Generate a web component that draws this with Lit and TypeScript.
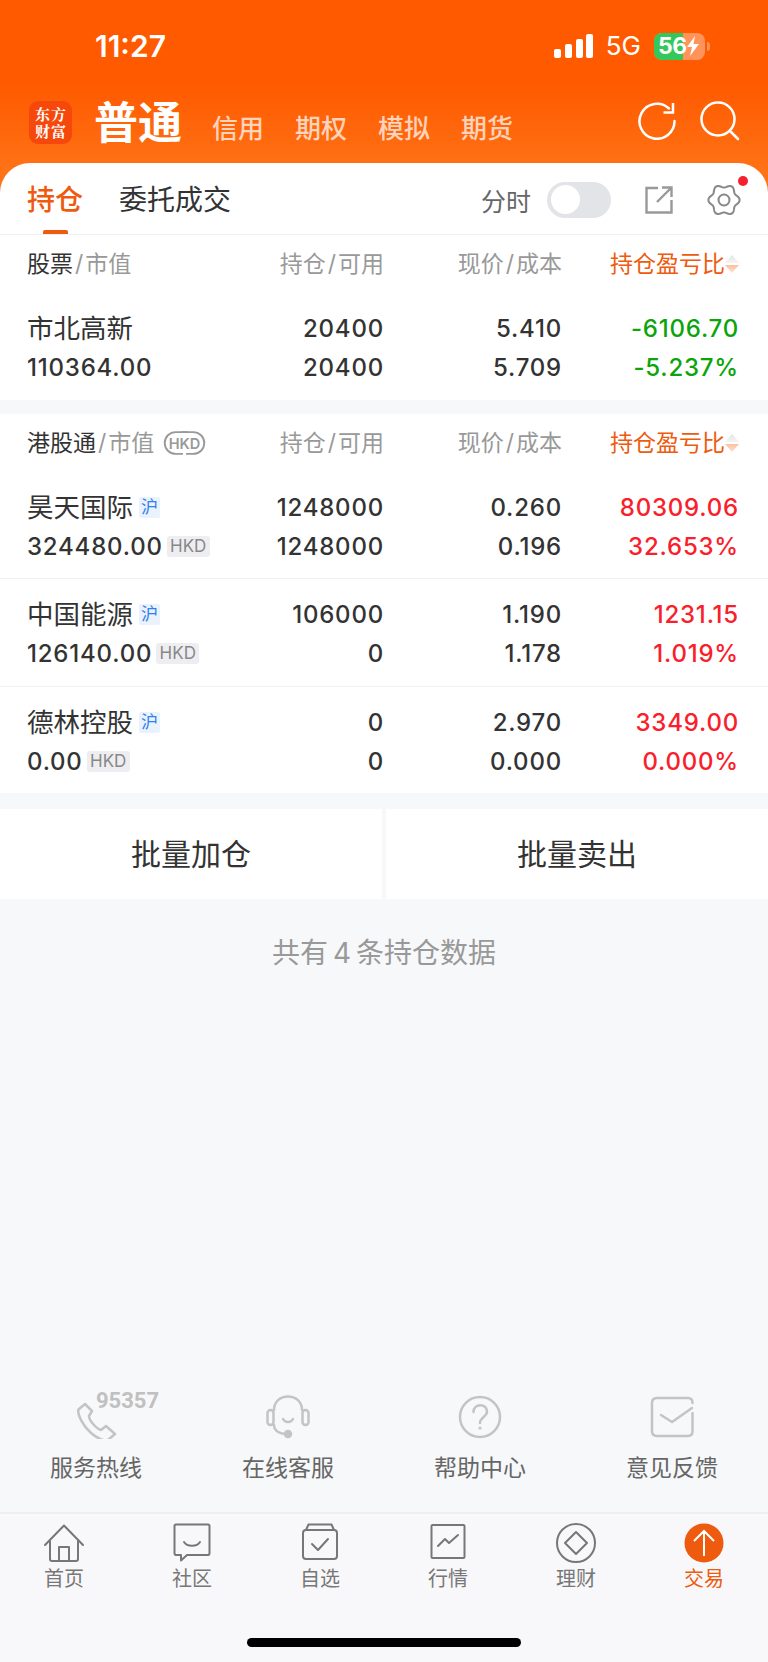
import { LitElement, html, css, svg } from "lit";
import { customElement } from "lit/decorators.js";

type Row = {
  name: string;
  sh?: boolean;
  value: string;
  hkd?: boolean;
  hold: string;
  avail: string;
  price: string;
  cost: string;
  pl: string;
  ratio: string;
  color: string;
};

const stockRows: Row[] = [
  { name: "市北高新", value: "110364.00", hold: "20400", avail: "20400", price: "5.410", cost: "5.709", pl: "-6106.70", ratio: "-5.237%", color: "down" },
];
const hkRows: Row[] = [
  { name: "昊天国际", sh: true, value: "324480.00", hkd: true, hold: "1248000", avail: "1248000", price: "0.260", cost: "0.196", pl: "80309.06", ratio: "32.653%", color: "up" },
  { name: "中国能源", sh: true, value: "126140.00", hkd: true, hold: "106000", avail: "0", price: "1.190", cost: "1.178", pl: "1231.15", ratio: "1.019%", color: "up" },
  { name: "德林控股", sh: true, value: "0.00", hkd: true, hold: "0", avail: "0", price: "2.970", cost: "0.000", pl: "3349.00", ratio: "0.000%", color: "up" },
];

// wavy outline for the settings gear
function gearPath(cx: number, cy: number): string {
  const pts: string[] = [];
  for (let i = 0; i < 120; i++) {
    const a = (i / 120) * Math.PI * 2 + Math.PI / 6;
    const r = 14 + 1.6 * Math.cos(6 * a);
    pts.push(`${(cx + r * Math.cos(a)).toFixed(2)} ${(cy + r * Math.sin(a)).toFixed(2)}`);
  }
  return "M" + pts.join("L") + "Z";
}

const services = [
  { label: "服务热线", icon: svg`<svg class="ico" width="44" height="44" viewBox="-1 -5 44 44"><path d="M10 4 L3.5 9.5 C2 14 8 26 16 33 C22 38 30 42 33 40 L40 34 L31 26 L26 30 C22 29 14 21 14 16 L17 11 Z"/></svg>` },
  { label: "在线客服", icon: svg`<svg class="ico" width="44" height="44" viewBox="0 0 44 44"><path d="M8 15 C8 -3 36 -3 36 15"/><rect x="1.5" y="15" width="6" height="15" rx="3"/><rect x="36.5" y="15" width="6" height="15" rx="3"/><path d="M17 24 C19 28 25 28 27 24"/><path d="M8 30 C8 36 14 39 20 39"/><circle cx="22" cy="39" r="3" fill="#c4c4c4"/></svg>` },
  { label: "帮助中心", icon: svg`<svg class="ico" width="44" height="44" viewBox="0 0 44 44"><circle cx="22" cy="22" r="20"/><path d="M15.5 17 C15.5 8 29 8 29 16.5 C29 22 22 22 22 28"/><circle cx="22" cy="33" r="1.6" fill="#c4c4c4" stroke="none"/></svg>` },
  { label: "意见反馈", icon: svg`<svg class="ico" width="44" height="44" viewBox="0 0 44 44"><path d="M42.5 18 V36 Q42.5 41 38 41 H7 Q2 41 2 36 V8 Q2 3 7 3 H38 Q42.5 3 42.5 8"/><path d="M11 20 L22 27 L42 13"/></svg>` },
];

const tabs = [
  { label: "首页", icon: svg`<svg class="tab-ico" width="42" height="40" viewBox="0 0 42 40"><path d="M2 22 L21 2.5 L40 22"/><path d="M7 18 V36 Q7 38 9 38 H33 Q35 38 35 36 V18"/><path d="M16 38 V24 H26 V38"/></svg>` },
  { label: "社区", icon: svg`<svg class="tab-ico" width="42" height="40" viewBox="0 0 42 40"><path d="M5 1.5 H37 Q38.5 1.5 38.5 3 V30 Q38.5 32 37 32 H16 L10 37.5 V32 H5 Q3.5 32 3.5 30 V3 Q3.5 1.5 5 1.5 Z"/><path d="M13 19 C16 24 26 24 29 19"/></svg>` },
  { label: "自选", icon: svg`<svg class="tab-ico" width="42" height="40" viewBox="0 0 42 40"><path d="M7 7 L9.5 1.5 H32.5 L35 7"/><rect x="4" y="7" width="34" height="29" rx="3"/><path d="M13 21 L19 27 L29 16"/></svg>` },
  { label: "行情", icon: svg`<svg class="tab-ico" width="42" height="40" viewBox="0 0 42 40"><rect x="4.5" y="2" width="33" height="33" rx="1"/><path d="M11 23 L18 16 L22 20 L31 12"/></svg>` },
  { label: "理财", icon: svg`<svg class="tab-ico" width="42" height="40" viewBox="0 0 42 40"><circle cx="21" cy="20" r="19"/><path d="M21 9 L32 20 L21 31 L10 20 Z"/></svg>` },
  { label: "交易", active: true, icon: svg`<svg width="42" height="40" viewBox="0 0 42 40"><circle cx="21" cy="20" r="19.5" fill="#ee5a0e"/><path d="M21 33 V8 M11 18 L21 8 L31 18" fill="none" stroke="#fff" stroke-width="2"/></svg>` },
];

@customElement("app-root")
export class AppRoot extends LitElement {
  static styles = css`
    :host {
      display: flex;
      flex-direction: column;
      width: 768px;
      height: 1662px;
      overflow: hidden;
      background: #f7f8fa;
      color: #333;
      font-family: Inter, "Noto Sans CJK SC", sans-serif;
    }
    .top {
      background: linear-gradient(#ff5a00 0, #ff5a00 85px, #ff7a1e 200px);
    }
    .status {
      box-sizing: border-box;
      display: flex;
      align-items: center;
      height: 66px;
      padding: 26px 58px 0 95px;
      color: #fff;
    }
    .time {
      font-size: 30px;
      font-weight: 600;
      line-height: 40px;
      flex: 1;
    }
    .five-g {
      font-size: 26px;
      margin: 0 13px 0 13px;
      line-height: 40px;
    }
    .battery {
      position: relative;
      width: 51px;
      height: 27px;
      border-radius: 8px;
      overflow: hidden;
      display: flex;
      align-items: center;
      background: rgba(255, 255, 255, 0.35);
      font-size: 23px;
      font-weight: 700;
      line-height: 27px;
    }
    .battery .fill {
      position: absolute;
      left: 0;
      top: 0;
      bottom: 0;
      width: 29px;
      background: #34c759;
    }
    .battery span,
    .battery svg {
      position: relative;
    }
    .battery span {
      margin-left: 4px;
      letter-spacing: -0.5px;
    }
    .nub {
      width: 3px;
      height: 9px;
      margin-left: 2px;
      background: rgba(255, 255, 255, 0.35);
      border-radius: 0 3px 3px 0;
    }
    .nav {
      height: 97px;
      display: flex;
      align-items: flex-start;
      padding-left: 29px;
      color: #fff;
    }
    .logo {
      width: 43px;
      height: 43px;
      margin-top: 35px;
      border-radius: 9px;
      background: #f5480a;
      display: grid;
      grid-template-columns: 16px 16px;
      justify-content: center;
      justify-items: center;
      align-items: center;
      padding: 5px 0;
      box-sizing: border-box;
      font-family: "Noto Serif CJK SC", "Noto Sans CJK SC", serif;
      font-weight: 700;
      font-size: 15px;
      line-height: 16px;
    }
    .title {
      font-size: 44px;
      font-weight: 700;
      line-height: 60px;
      margin: 24px 30px 0 22px;
      font-family: "Noto Sans CJK SC", sans-serif;
    }
    .nav-item {
      font-size: 26px;
      line-height: 36px;
      margin: 45px 31px 0 0;
      color: rgba(255, 255, 255, 0.72);
      font-weight: 500;
    }
    .nav-right {
      margin-left: auto;
      display: flex;
      gap: 22px;
      padding: 35px 28px 0 0;
    }
    .nav-right svg {
      fill: none;
      stroke: #fff;
      stroke-width: 2.5;
      stroke-linecap: round;
    }
    .panel {
      height: 72px;
      box-sizing: border-box;
      background: #fff;
      border-radius: 30px 30px 0 0;
      display: flex;
      align-items: center;
      padding: 2px 28px 0 27px;
      position: relative;
      border-bottom: 1px solid #f0f0f2;
    }
    .tab {
      font-size: 28px;
      line-height: 40px;
      margin-right: 36px;
      color: #333;
    }
    .tab.on {
      color: #ee5a0e;
      font-weight: 500;
    }
    .tab-line {
      position: absolute;
      left: 43px;
      bottom: 0;
      width: 25px;
      height: 4px;
      border-radius: 2px 2px 0 0;
      background: #ee5a0e;
    }
    .split {
      font-size: 25px;
      color: #666;
      margin-left: auto;
    }
    .toggle {
      width: 64px;
      height: 36px;
      margin-left: 16px;
      border-radius: 18px;
      background: #e3e4e7;
      box-sizing: border-box;
      padding: 3.5px 4px;
    }
    .toggle i {
      display: block;
      width: 29px;
      height: 29px;
      border-radius: 50%;
      background: #fff;
    }
    .share {
      margin-left: 34px;
      fill: none;
      stroke: #999;
      stroke-width: 2.4;
    }
    .gear {
      position: relative;
      margin-left: 34px;
      margin-right: -1px;
      width: 34px;
      height: 34px;
    }
    .gear svg {
      fill: none;
      stroke: #888;
      stroke-width: 2;
    }
    .gear b {
      position: absolute;
      right: -7px;
      top: -7px;
      width: 10px;
      height: 10px;
      border-radius: 50%;
      background: #f5222d;
    }
    .section {
      background: #fff;
      margin-bottom: 14px;
    }
    .grid {
      display: grid;
      grid-template-columns: 207px 150px 178px 177px;
      padding: 0 29px 0 27px;
    }
    .grid > div {
      text-align: right;
    }
    .grid > div:first-child {
      text-align: left;
    }
    .head {
      height: 58px;
      font-size: 23px;
      line-height: 58px;
      color: #999;
      white-space: nowrap;
    }
    .head em {
      font-style: normal;
      color: #333;
    }
    .head u {
      text-decoration: none;
      margin: 0 2px;
    }
    .head .sort {
      color: #ee5a0e;
    }
    .head .label {
      display: flex;
      align-items: center;
    }
    .hkd-ico {
      margin-left: 8px;
      fill: none;
      stroke: #999;
      stroke-width: 1.8;
    }
    .hkd-ico text {
      fill: #999;
      stroke: none;
      font: 600 14px Inter, sans-serif;
    }
    .sort-wrap {
      display: flex;
      justify-content: flex-end;
      align-items: center;
    }
    .row {
      padding-top: 16px;
      padding-bottom: 12.5px;
      font-size: 24px;
      line-height: 39px;
      font-weight: 500;
      letter-spacing: 0.8px;
      border-top: 1px solid #f0f0f2;
    }
    .row.first {
      border-top: 0;
    }
    .name {
      font-size: 26.5px;
      font-weight: 400;
      letter-spacing: 0;
      display: flex;
      align-items: center;
    }
    .val {
      display: flex;
      align-items: center;
    }
    .sh {
      width: 21px;
      height: 21px;
      margin-left: 6px;
      background: #e9f2fd;
      color: #2f80ed;
      font-size: 17px;
      line-height: 21px;
      text-align: center;
      border-radius: 2px;
    }
    .hkd {
      height: 21px;
      width: 43px;
      margin-left: 4px;
      background: #eeeef2;
      color: #888;
      border-radius: 3px;
      font-size: 17px;
      font-weight: 400;
      letter-spacing: 0;
      line-height: 21px;
      text-align: center;
    }
    .up {
      color: #f9202b;
    }
    .down {
      color: #0aa50a;
    }
    .actions {
      display: flex;
      gap: 4px;
      height: 90px;
      margin-top: 2px;
    }
    .actions div {
      flex: 1;
      background: #fff;
      font-size: 30px;
      line-height: 90px;
      text-align: center;
      color: #333;
    }
    .count {
      margin-top: 34px;
      font-size: 28px;
      line-height: 40px;
      text-align: center;
      color: #999;
      word-spacing: -3px;
    }
    .services {
      margin-top: auto;
      display: grid;
      grid-template-columns: repeat(4, 192px);
      height: 142px;
    }
    .svc {
      position: relative;
      display: flex;
      flex-direction: column;
      align-items: center;
      font-size: 23px;
      line-height: 34px;
      color: #666;
    }
    .svc svg {
      margin-top: 25px;
      margin-bottom: 12px;
    }
    .ico {
      fill: none;
      stroke: #c4c4c4;
      stroke-width: 2.5;
      stroke-linecap: round;
      stroke-linejoin: round;
    }
    .hotline {
      position: absolute;
      left: 96px;
      top: 19px;
      font: 700 22px/24px Roboto, sans-serif;
      color: #c0c0c0;
    }
    .tabs {
      display: grid;
      grid-template-columns: repeat(6, 128px);
      height: 150px;
      box-sizing: border-box;
      border-top: 2px solid #eeeef0;
      background: #f8f8fa;
      position: relative;
    }
    .tab-item {
      display: flex;
      flex-direction: column;
      align-items: center;
      padding-top: 9px;
      font-size: 20px;
      line-height: 28px;
      color: #777;
    }
    .tab-item svg {
      margin-bottom: 2px;
    }
    .tab-item.on {
      color: #ee5a0e;
    }
    .tab-ico {
      fill: none;
      stroke: #777;
      stroke-width: 2;
      stroke-linejoin: round;
      stroke-linecap: round;
    }
    .home-bar {
      position: absolute;
      left: 247px;
      bottom: 15px;
      width: 274px;
      height: 9px;
      border-radius: 5px;
      background: #000;
    }
  `;

  private sortIcon() {
    return html`<svg width="14" height="18" viewBox="0 0 14 18">
      <defs>
        <linearGradient id="su" x1="0" y1="0" x2="0" y2="1"><stop offset="0" stop-color="#e4e4e4" /><stop offset="1" stop-color="#f4f4f4" /></linearGradient>
        <linearGradient id="sd" x1="0" y1="0" x2="0" y2="1"><stop offset="0" stop-color="#fbbf9f" /><stop offset="1" stop-color="#fde3d5" /></linearGradient>
      </defs>
      <path d="M7 0 L14 8 H0 Z" fill="url(#su)" />
      <path d="M0 10 H14 L7 18 Z" fill="url(#sd)" />
    </svg>`;
  }

  private head(title: string, hkd: boolean) {
    return html`<div class="grid head">
      <div class="label">
        <em>${title}</em><u>/</u>市值
        ${hkd
          ? html`<svg class="hkd-ico" width="45" height="26" viewBox="0 0 43 25">
              <path d="M25 2 H13 A10.5 10.5 0 0 0 13 23 H20" />
              <path d="M18 2 H30 A10.5 10.5 0 0 1 30 23 H23" />
              <text x="21.5" y="18" text-anchor="middle">HKD</text>
            </svg>`
          : ""}
      </div>
      <div>持仓<u>/</u>可用</div>
      <div>现价<u>/</u>成本</div>
      <div class="sort sort-wrap">持仓盈亏比${this.sortIcon()}</div>
    </div>`;
  }

  private row(r: Row, first: boolean) {
    return html`<div class="grid row ${first ? "first" : ""}">
      <div>
        <div class="name">${r.name}${r.sh ? html`<span class="sh">沪</span>` : ""}</div>
        <div class="val">${r.value}${r.hkd ? html`<span class="hkd">HKD</span>` : ""}</div>
      </div>
      <div>${r.hold}<br />${r.avail}</div>
      <div>${r.price}<br />${r.cost}</div>
      <div class=${r.color}>${r.pl}<br />${r.ratio}</div>
    </div>`;
  }

  render() {
    return html`
      <div class="top">
        <div class="status">
          <div class="time">11:27</div>
          <svg width="39" height="24" viewBox="0 0 39 24" fill="#fff">
            <rect x="0" y="15" width="7" height="9" rx="2" />
            <rect x="11" y="10" width="7" height="14" rx="2" />
            <rect x="22" y="5" width="7" height="19" rx="2" />
            <rect x="32" y="0" width="7" height="24" rx="2" />
          </svg>
          <div class="five-g">5G</div>
          <div class="battery">
            <div class="fill"></div>
            <span>56</span>
            <svg width="12" height="20" viewBox="0 0 12 20" fill="#fff"><path d="M8 0 L0 11 H5 L3 20 L12 8 H6.5 Z" /></svg>
          </div>
          <div class="nub"></div>
        </div>
        <div class="nav">
          <div class="logo"><span>东</span><span>方</span><span>财</span><span>富</span></div>
          <div class="title">普通</div>
          <div class="nav-item">信用</div>
          <div class="nav-item">期权</div>
          <div class="nav-item">模拟</div>
          <div class="nav-item">期货</div>
          <div class="nav-right">
            <svg width="40" height="40" viewBox="0 0 40 40">
              <path d="M36.5 20 A17.5 17.5 0 1 1 31 7.5" />
              <path d="M35 2 V11.5 H25.5" stroke-linecap="butt" />
            </svg>
            <svg width="40" height="40" viewBox="0 0 40 40">
              <circle cx="18" cy="18" r="16.5" />
              <path d="M30 30 L38 38" />
            </svg>
          </div>
        </div>
        <div class="panel">
          <div class="tab on">持仓</div>
          <div class="tab">委托成交</div>
          <div class="tab-line"></div>
          <div class="split">分时</div>
          <div class="toggle"><i></i></div>
          <svg class="share" width="28" height="28" viewBox="0 0 28 28">
            <path d="M13 2 H1.5 V26.5 H26.5 V14" />
            <path d="M12 16 L26 2 M17 1.5 H26.5 V11" />
          </svg>
          <div class="gear">
            <svg width="34" height="34" viewBox="0 0 34 34">
              <path d=${gearPath(17, 17)} />
              <circle cx="17" cy="17" r="5.5" />
            </svg>
            <b></b>
          </div>
        </div>
      </div>
      <div class="section">
        ${this.head("股票", false)}
        ${stockRows.map((r, i) => this.row(r, i === 0))}
      </div>
      <div class="section">
        ${this.head("港股通", true)}
        ${hkRows.map((r, i) => this.row(r, i === 0))}
      </div>
      <div class="actions">
        <div>批量加仓</div>
        <div>批量卖出</div>
      </div>
      <div class="count">共有 4 条持仓数据</div>
      <div class="services">
        ${services.map(
          (s, i) => html`<div class="svc">
            ${s.icon}
            ${s.label}
            ${i === 0 ? html`<span class="hotline">95357</span>` : ""}
          </div>`,
        )}
      </div>
      <div class="tabs">
        ${tabs.map(
          (t) => html`<div class="tab-item ${t.active ? "on" : ""}">${t.icon}${t.label}</div>`,
        )}
        <div class="home-bar"></div>
      </div>
    `;
  }
}
